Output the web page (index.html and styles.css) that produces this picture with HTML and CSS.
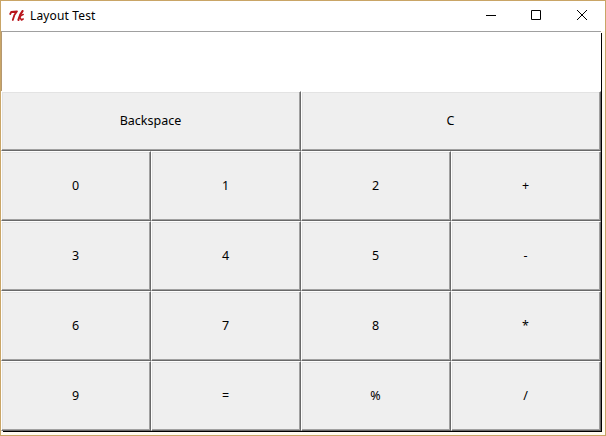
FILE: index.html
```html
<!DOCTYPE html>
<html lang="en">
<head>
<meta charset="utf-8">
<title>Layout Test</title>
<link rel="stylesheet" href="styles.css">
</head>
<body>
<main class="window">
  <header class="titlebar">
    <svg class="logo" width="16" height="13" viewBox="0 0 16 13" fill="none" stroke="#b9151b" stroke-linecap="round" stroke-linejoin="round">
      <path d="M1.2 4 2.2 2 8 1.3 5.4 5 3.8 10" stroke-width="1.8"/>
      <path d="M13.6 1Q10.5 4.5 9.4 10" stroke-width="2.1"/>
      <path d="M14.2 4.6Q12.3 4.8 10.7 7.1L12.5 10 14.2 9" stroke-width="1.5"/>
    </svg>
    <h1 class="title">Layout Test</h1>
    <svg class="controls" width="103" height="12" viewBox="0 0 103 12" fill="none" stroke="#000">
      <path d="M0 6.5H10"/>
      <path d="M45.5 1.5H54.5V10.5H45.5Z"/>
      <path d="M91 1 101 11M101 1 91 11"/>
    </svg>
  </header>
  <section class="calculator">
    <div class="display"></div>
    <div class="keys">
      <button class="key wide">Backspace</button><button class="key wide">C</button>
      <button class="key">0</button><button class="key">1</button><button class="key">2</button><button class="key">+</button>
      <button class="key">3</button><button class="key">4</button><button class="key">5</button><button class="key">-</button>
      <button class="key">6</button><button class="key">7</button><button class="key">8</button><button class="key">*</button>
      <button class="key">9</button><button class="key">=</button><button class="key">%</button><button class="key">/</button>
    </div>
  </section>
</main>
</body>
</html>
```
FILE: styles.css
```css
* {
  box-sizing: border-box;
}

body {
  margin: 0;
  font: 13px/18px "Noto Sans", sans-serif;
  color: #000;
}

.window {
  width: 606px;
  height: 436px;
  border: 1px solid #c9a566;
  background: #fffaf0;
}

.titlebar {
  display: flex;
  align-items: center;
  height: 30px;
  padding: 0 16px 2px 8px;
  background: #fff;
}

.logo {
  margin-top: 2px;
}

.title {
  margin: 1px auto 0 5px;
  font-size: 12px;
  font-weight: 400;
  letter-spacing: 0.15px;
}

.controls {
  margin-bottom: 1px;
}

.calculator {
  width: 600px;
  height: 400px;
  box-shadow: 1px 1px 0 #000;
  clip-path: polygon(0 0, 600px 0, 600px 2px, 601px 2px, 601px 401px, 2px 401px, 2px 400px, 0 400px);
}

.display {
  height: 60px;
  border-top: 1px solid #a0a0a0;
  border-left: 1px solid #b59871;
  background: #fff;
}

.keys {
  display: grid;
  grid-template-columns: repeat(4, 150px);
  grid-template-rows: 60px repeat(4, 70px);
}

.key {
  padding: 0 1px 1px 0;
  border: 1px solid;
  border-color: #fff #696969 #696969 #fff;
  border-radius: 0;
  background: #efefef;
  box-shadow: inset -1px -1px #a0a0a0, inset 1px 1px #e3e3e3;
  font: inherit;
  font-size: 12.5px;
  color: inherit;
}

.wide {
  grid-column: span 2;
}
```
